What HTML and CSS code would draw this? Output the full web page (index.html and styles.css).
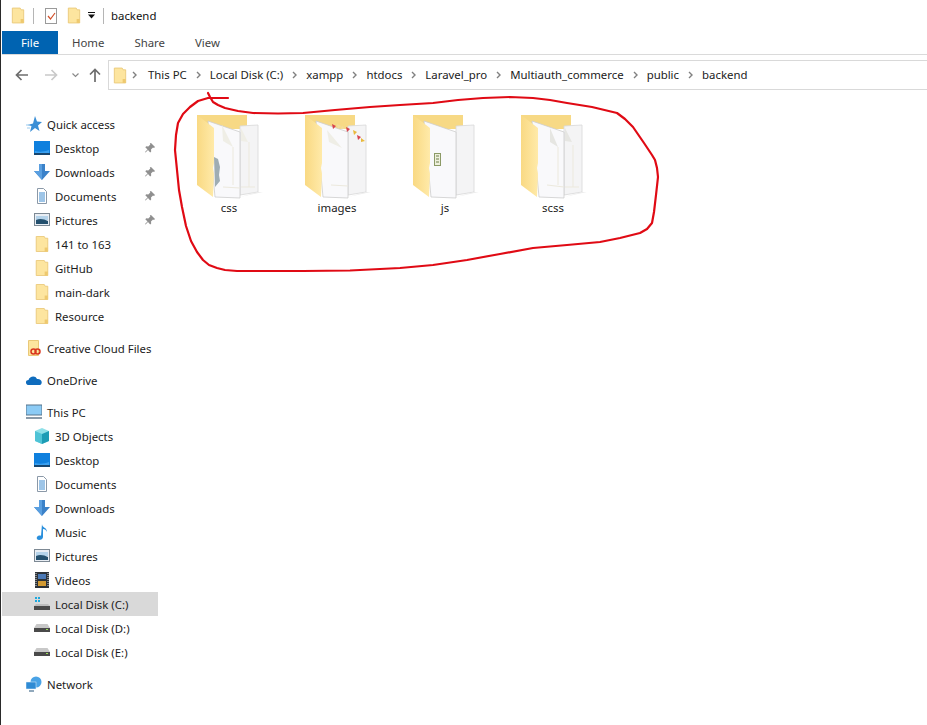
FILE: index.html
```html
<!DOCTYPE html>
<html lang="en">
<head>
    <meta charset="UTF-8">
    <title>backend</title>
    <link rel="stylesheet" href="styles.css">
</head>
<body>
    <!-- shared icons -->
    <svg class="defs" width="0" height="0">
        <defs>
            <linearGradient id="yellow" x1="0" y1="0" x2="1" y2="0">
                <stop offset="0" stop-color="#f9d983"/>
                <stop offset="1" stop-color="#ffeaa9"/>
            </linearGradient>
        </defs>
        <symbol id="i-folder" viewBox="0 0 16 18">
            <path d="M1.500 .5h9l1 2h3v15h-13z" fill="#fde59f" stroke="#e9c878"/>
            <path d="M11 13h3.500v4.500h-3.500z" fill="#eec96f"/>
        </symbol>
        <symbol id="i-desktop" viewBox="0 0 16 14">
            <rect x="0" y="0" width="16" height="13" fill="#0f80de"/>
            <rect x="0" y="12" width="16" height="2" fill="#17466f"/>
            <path d="M1 10c4 1 9 1 14-1v3h-14z" fill="#3aa0f0"/>
        </symbol>
        <symbol id="i-down" viewBox="0 0 16 16">
            <path d="M5 0h6v7h5l-8 9-8-9h5z" fill="#3b82c9"/>
            <path d="M5 0h3v16l-8-9h5z" fill="#5a9fe0"/>
        </symbol>
        <symbol id="i-doc" viewBox="0 0 16 16">
            <path d="M3.500 .5h6l3 3v12h-9z" fill="#fff" stroke="#8b99a8"/>
            <path d="M5 5h6M5 7h6M5 9h6M5 11h6M5 13h6" stroke="#3d8bd0"/>
        </symbol>
        <symbol id="i-pic" viewBox="0 0 16 14">
            <rect x=".5" y=".5" width="15" height="12" fill="#e9eef4" stroke="#7d8994"/>
            <rect x="2" y="3" width="12" height="4" fill="#b5d3ea"/>
            <path d="M2 7c4-2 8-1 12 1v3h-12z" fill="#24506e"/>
        </symbol>
        <symbol id="i-pin" viewBox="0 0 10 10">
            <path d="M6 0l4 4-1 1-1-.5-2 2 .2 2-1 1-2.200-2.400-2.500 2.500-.5-.5 2.500-2.500-2.200-2.300 1-1 2 .2 2-2-.5-1z" fill="#8f8f8f"/>
        </symbol>
        <symbol id="i-disk" viewBox="0 0 16 8">
            <path d="M2.500 0h11l2.500 4h-16z" fill="#c8c8c8"/>
            <rect y="4" width="16" height="4" fill="#4a4a4a"/>
            <rect x="12" y="5" width="2" height="1" fill="#9be05a"/>
        </symbol>
        <symbol id="i-chev" viewBox="0 0 5 8">
            <path d="M1 1l3 3-3 3" fill="none" stroke="#808080" stroke-width="1.400"/>
        </symbol>
        <symbol id="i-big" viewBox="0 0 66 84">
            <path d="M0 0h50v14h-50z" fill="#f7d985"/>
            <path d="M43 11l18-1v67l-18 3z" fill="#f4f4f5" stroke="#d8d8d8" stroke-width=".8"/>
            <path d="M61 77l5 0-23 5z" fill="#ececec"/>
            <path d="M11 6l32 11v66l-25-1z" fill="#f9f9fb" stroke="#cdcdcd" stroke-width=".8"/>
            <path d="M0 0l17 13v35l-1 5 1 6-1 23-16-12z" fill="url(#yellow)"/>
        </symbol>
    </svg>

    <div class="titlebar">
        <svg class="ic-folder"><use href="#i-folder"/></svg>
        <span class="sep"></span>
        <svg class="ic-check" viewBox="0 0 13 16">
            <rect x=".5" y=".5" width="11" height="15" fill="#fff" stroke="#9a9a9a"/>
            <path d="M3 8l2.500 3 4.500-6" fill="none" stroke="#d2502a" stroke-width="1.200"/>
        </svg>
        <svg class="ic-folder"><use href="#i-folder"/></svg>
        <svg class="ic-drop" viewBox="0 0 7 7">
            <path d="M0 0h7v1h-7zM0 2.500h7l-3.500 4z" fill="#111"/>
        </svg>
        <span class="sep"></span>
        <span class="title">backend</span>
    </div>

    <div class="tabs">
        <div class="tab tab-file">File</div>
        <div class="tab">Home</div>
        <div class="tab">Share</div>
        <div class="tab">View</div>
    </div>

    <div class="navbar">
        <svg class="nav-btn" viewBox="0 0 14 12"><path d="M13 6h-11M6.500 1l-5 5 5 5" fill="none" stroke="#6d6d6d" stroke-width="1.700"/></svg>
        <svg class="nav-btn" viewBox="0 0 14 12"><path d="M1 6h11M7.500 1l5 5-5 5" fill="none" stroke="#c9c9c9" stroke-width="1.700"/></svg>
        <svg class="nav-drop" viewBox="0 0 7 5"><path d="M.5 .5l3 3 3-3" fill="none" stroke="#8a8a8a" stroke-width="1.200"/></svg>
        <svg class="nav-up" viewBox="0 0 12 14"><path d="M6 14v-12M1 6.500l5-5 5 5" fill="none" stroke="#6d6d6d" stroke-width="1.700"/></svg>
        <div class="address">
            <svg class="ic-folder"><use href="#i-folder"/></svg>
            <svg class="chev chev-first"><use href="#i-chev"/></svg><span>This PC</span>
            <svg class="chev"><use href="#i-chev"/></svg><span>Local Disk (C:)</span>
            <svg class="chev"><use href="#i-chev"/></svg><span>xampp</span>
            <svg class="chev"><use href="#i-chev"/></svg><span>htdocs</span>
            <svg class="chev"><use href="#i-chev"/></svg><span>Laravel_pro</span>
            <svg class="chev"><use href="#i-chev"/></svg><span>Multiauth_commerce</span>
            <svg class="chev"><use href="#i-chev"/></svg><span>public</span>
            <svg class="chev"><use href="#i-chev"/></svg><span>backend</span>
        </div>
    </div>

    <div class="content">
        <nav class="sidebar">
            <div class="group">
                <div class="row top">
                    <svg class="ic" viewBox="0 0 16 16"><path d="M9 0l2 5.500 5 .5-4 3.500 1.500 5.500-4.500-3-5 4 1.500-6-4-1 5.500-1.500z" fill="#3b8fd6"/><path d="M0 9h4M1 12h3" stroke="#9ccbee"/></svg>
                    Quick access
                </div>
                <div class="row"><svg class="ic"><use href="#i-desktop"/></svg>Desktop<svg class="pin"><use href="#i-pin"/></svg></div>
                <div class="row"><svg class="ic"><use href="#i-down"/></svg>Downloads<svg class="pin"><use href="#i-pin"/></svg></div>
                <div class="row"><svg class="ic"><use href="#i-doc"/></svg>Documents<svg class="pin"><use href="#i-pin"/></svg></div>
                <div class="row"><svg class="ic"><use href="#i-pic"/></svg>Pictures<svg class="pin"><use href="#i-pin"/></svg></div>
                <div class="row"><svg class="ic"><use href="#i-folder"/></svg>141 to 163</div>
                <div class="row"><svg class="ic"><use href="#i-folder"/></svg>GitHub</div>
                <div class="row"><svg class="ic"><use href="#i-folder"/></svg>main-dark</div>
                <div class="row"><svg class="ic"><use href="#i-folder"/></svg>Resource</div>
            </div>
            <div class="group">
                <div class="row top">
                    <svg class="ic" viewBox="0 0 16 16">
                        <path d="M2.500 .5h10v15h-10z" fill="#fde59f" stroke="#e9c878"/>
                        <circle cx="7.500" cy="11.500" r="2.500" fill="none" stroke="#d9371f" stroke-width="1.500"/>
                        <circle cx="11.500" cy="11.500" r="2.500" fill="none" stroke="#d9371f" stroke-width="1.500"/>
                    </svg>
                    Creative Cloud Files
                </div>
            </div>
            <div class="group">
                <div class="row top">
                    <svg class="ic" viewBox="0 0 16 16"><path d="M3 13c-4 0-4-5-.5-5 1-4 7-5 8.500-1 3-.5 5.500 2 4.500 4.500-.5 1-1 1.500-2.500 1.500z" fill="#0f6cbd"/></svg>
                    OneDrive
                </div>
            </div>
            <div class="group">
                <div class="row top">
                    <svg class="ic" viewBox="0 0 16 16"><rect y="1" width="16" height="10" fill="#8ccbf5" stroke="#56748c"/><path d="M0 14h16" stroke="#8a9aa8" stroke-width="2"/></svg>
                    This PC
                </div>
                <div class="row">
                    <svg class="ic" viewBox="0 0 16 16"><path d="M8 0l7 3v10l-7 3-7-3v-10z" fill="#8fe0e8"/><path d="M8 6l7-3v10l-7 3z" fill="#1d9cb5"/><path d="M1 3l7 3v10l-7-3z" fill="#4fc3d6"/></svg>
                    3D Objects
                </div>
                <div class="row"><svg class="ic"><use href="#i-desktop"/></svg>Desktop</div>
                <div class="row"><svg class="ic"><use href="#i-doc"/></svg>Documents</div>
                <div class="row"><svg class="ic"><use href="#i-down"/></svg>Downloads</div>
                <div class="row">
                    <svg class="ic" viewBox="0 0 16 16"><path d="M8 0c0 4 5 3 5 8-1-2-2-3-4-3v8c0 2-2 3-4 3-2.500 0-3-3-1-4 1-.5 2-.5 3-.2z" fill="#2a8fdc"/></svg>
                    Music
                </div>
                <div class="row"><svg class="ic"><use href="#i-pic"/></svg>Pictures</div>
                <div class="row">
                    <svg class="ic" viewBox="0 0 16 16"><rect x="1" width="14" height="16" fill="#2c3238"/><rect x="4" y="2" width="8" height="5" fill="#4a78b5"/><rect x="4" y="9" width="8" height="5" fill="#d29a33"/><path d="M2 1v14M14 1v14" stroke="#ddd" stroke-dasharray="1 1"/></svg>
                    Videos
                </div>
                <div class="row row-active">
                    <svg class="ic" viewBox="0 0 16 16"><path d="M1 1h2v2h-2zM4 1h2v2h-2zM1 4h2v2h-2zM4 4h2v2h-2z" fill="#1ca8dd"/><rect y="10" width="16" height="4" fill="#4a4a4a"/><path d="M2 8h12l2 2h-16z" fill="#bdbdbd"/></svg>
                    Local Disk (C:)
                </div>
                <div class="row"><svg class="ic ic-disk"><use href="#i-disk"/></svg>Local Disk (D:)</div>
                <div class="row"><svg class="ic ic-disk"><use href="#i-disk"/></svg>Local Disk (E:)</div>
            </div>
            <div class="group">
                <div class="row top">
                    <svg class="ic" viewBox="0 0 16 16"><circle cx="10" cy="6" r="5.500" fill="#4aa3e6"/><rect x="0" y="6" width="10" height="7" fill="#2f8bd4" stroke="#e8f2fa" stroke-width=".5"/><path d="M3 15h5" stroke="#6d8ca6" stroke-width="1.500"/></svg>
                    Network
                </div>
            </div>
        </nav>

        <main class="files">
            <div class="tile">
                <div class="big">
                    <svg class="big-svg"><use href="#i-big"/></svg>
                    <svg class="big-extra" viewBox="0 0 66 84">
                        <path d="M25 10l11 22-10-6z" fill="#efeee6"/>
                        <path d="M44 13l7 14-7-1z" fill="#efeee6"/>
                        <path d="M17 42l4 2 2 8-1 8 1 6-5 6z" fill="#9fadb3"/>
                        <path d="M36 32v38M52 27v45M26 72l17 1M44 72h14" stroke="#ece9dd"/>
                    </svg>
                </div>
                <span>css</span>
            </div>
            <div class="tile">
                <div class="big">
                    <svg class="big-svg"><use href="#i-big"/></svg>
                    <svg class="big-extra" viewBox="0 0 66 84">
                        <path d="M22 15l15 18-13-6z" fill="#efeee6"/>
                        <path d="M27 9l4 2-3 3zM41 12l4 2-3 3zM52 20l4 2-3 3z" fill="#d8434e"/>
                        <path d="M32 9l4 2-3 3zM37 11l3 3-4 0z" fill="#f0dca0"/>
                        <path d="M48 15l4 2-3 3zM56 23l4 3-4 1z" fill="#e9b93b"/>
                        <path d="M26 70l17 1" stroke="#ece9dd"/>
                    </svg>
                </div>
                <span>images</span>
            </div>
            <div class="tile">
                <div class="big">
                    <svg class="big-svg"><use href="#i-big"/></svg>
                    <svg class="big-extra" viewBox="0 0 66 84">
                        <rect x="21.500" y="38.500" width="6" height="12" fill="#eef0dc" stroke="#8c9a66"/>
                        <path d="M23 41h3M23 44h3M23 47h3" stroke="#6f7f4a"/>
                    </svg>
                </div>
                <span>js</span>
            </div>
            <div class="tile">
                <div class="big">
                    <svg class="big-svg"><use href="#i-big"/></svg>
                    <svg class="big-extra" viewBox="0 0 66 84">
                        <path d="M29 13l8 19-8-5zM44 13l7 14-7-1z" fill="#e6e6e2"/>
                        <path d="M37 32v38M52 30v42M26 70l17 2M44 72h14" stroke="#ece9dd"/>
                    </svg>
                </div>
                <span>scss</span>
            </div>
        </main>
    </div>

    <!-- hand drawn marker over the files -->
    <svg class="marker" viewBox="0 0 927 725">
        <polyline points="208,93 210,97 213,102 218,105 225,108 238,111 253,113 278,113.500 303,113 335,110 370,107 400,105 433,103 458,100 483,98 510,97 533,98 550,100 567,103 592,107 617,113 625,119 633,127 644,143 652,155 655,160 657,168 658,177 656,195 654,212 652,223 647,229 640,233 620,238 600,242 567,245 533,248 500,254 467,260 433,265 400,268 350,270.500 303,271 270,271 237,271 225,270 217,268 209,265 203,260 197,252 191,241 186,226 182,207 179,190 177,170 175,150 176,135 178,123 183,114 190,107 198,101 208,98 218,98 228,98" fill="none" stroke="#e00a14" stroke-width="2.200" stroke-linejoin="round" stroke-linecap="round"/>
    </svg>
</body>
</html>
```

FILE: styles.css
```css
body {
    font-family: "Noto Sans", "Open Sans", sans-serif;
    font-size: 11.4px;
    margin: 0;
    padding: 0;
    height: 725px;
    overflow: hidden;
    background: white;
    color: #1c1c1c;
    border-left: 1px solid #2a2a2a;
    position: relative;
}
.defs {
    position: absolute;
}
.ic-folder {
    width: 14px;
    height: 17px;
    flex: none;
}
.titlebar {
    display: flex;
    align-items: center;
    height: 31px;
    padding-left: 10px;
    box-sizing: border-box;
}
.sep {
    width: 1px;
    height: 16px;
    background: #b5b5b5;
    margin: 0 7px 0 8px;
}
.ic-check {
    width: 13px;
    height: 16px;
    margin: 0 9px 0 4px;
}
.ic-drop {
    width: 7px;
    height: 7px;
    margin-left: 7px;
}
.title {
    color: #111;
}
.tabs {
    display: flex;
    gap: 2px;
    height: 23px;
    margin-left: 1px;
    border-bottom: 1px solid #dadada;
}
.tab {
    padding: 0 14px;
    line-height: 24px;
    color: #444;
}
.tab-file {
    width: 56px;
    margin-right: -2px;
    padding: 0;
    box-sizing: border-box;
    text-align: center;
    background: #0063b1;
    color: white;
}
.navbar {
    display: flex;
    align-items: center;
    height: 30px;
    margin-top: 5px;
    padding-left: 14px;
}
.nav-btn {
    width: 14px;
    height: 12px;
    margin-right: 15px;
}
.nav-drop {
    width: 7px;
    height: 5px;
    margin-left: -1px;
    margin-right: 10px;
}
.nav-up {
    width: 12px;
    height: 14px;
    margin-right: 7px;
}
.address {
    flex: 1;
    display: flex;
    align-items: center;
    height: 30px;
    box-sizing: border-box;
    padding-left: 4px;
    border: 1px solid #d9d9d9;
    border-right: none;
    color: #222;
    white-space: nowrap;
}
.address span {
    margin-bottom: 2px;
}
.chev {
    width: 5px;
    height: 8px;
    margin: 0 9px;
    flex: none;
}
.chev-first {
    margin: 0 11px 0 5px;
}
.content {
    display: flex;
}
.sidebar {
    width: 156px;
    margin-left: 1px;
    padding-top: 22px;
    flex: none;
}
.group {
    margin-bottom: 8px;
}
.row {
    display: flex;
    align-items: center;
    height: 24px;
    padding-left: 32px;
    white-space: nowrap;
}
.row.top {
    padding-left: 24px;
}
.row-active {
    background: #d9d9d9;
}
.ic {
    width: 16px;
    height: 16px;
    margin-right: 5px;
    flex: none;
}
.ic-disk {
    height: 8px;
}
.pin {
    width: 10px;
    height: 10px;
    margin-left: auto;
    margin-right: 3px;
}
.files {
    display: grid;
    grid-template-columns: repeat(4, 108px);
    align-content: start;
    padding: 25px 0 0 17px;
}
.tile {
    display: flex;
    flex-direction: column;
    align-items: center;
    color: #222;
}
.big {
    position: relative;
    width: 66px;
    height: 84px;
    margin: 0 0 1px 2px;
}
.big-svg, .big-extra {
    position: absolute;
    left: 0;
    top: 0;
    width: 66px;
    height: 84px;
}
.marker {
    position: absolute;
    left: -1px;
    top: 0;
    width: 927px;
    height: 725px;
    pointer-events: none;
}
```
